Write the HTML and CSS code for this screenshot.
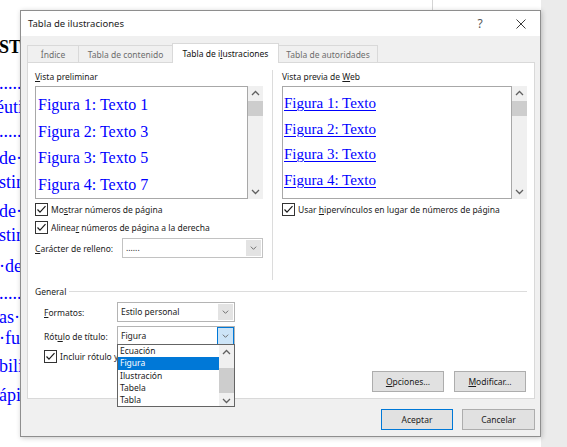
FILE: index.html
```html
<!DOCTYPE html>
<html lang="es">
<head>
<meta charset="utf-8">
<title>Tabla de ilustraciones</title>
<link rel="stylesheet" href="styles.css">
</head>
<body>
<svg class="icon-defs" aria-hidden="true">
  <symbol id="i-up" viewBox="0 0 15 15"><polyline points="4,9 7.5,5.5 11,9" fill="none" stroke="#606060" stroke-width="1.3"/></symbol>
  <symbol id="i-down" viewBox="0 0 15 15"><polyline points="4,6 7.5,9.5 11,6" fill="none" stroke="#606060" stroke-width="1.3"/></symbol>
  <symbol id="i-drop" viewBox="0 0 15 18"><polyline points="4.5,7.5 7.5,10.5 10.5,7.5" fill="none" stroke="#606060" stroke-width="1"/></symbol>
  <symbol id="i-check" viewBox="0 0 11 11"><polyline points="1.5,5.5 4,8.2 9.5,2.2" fill="none" stroke="#1a1a1a" stroke-width="1.2"/></symbol>
</svg>

<div class="desk">
  <div class="doc">
    <div class="doc-rule"></div>
    <p class="doc-p doc-head">ST</p>
    <p class="doc-p">..............<br><span class="cut">éutica</span><br>..............</p>
    <p class="doc-p">de·las<br>stintas</p>
    <p class="doc-p">de·los<br>stintos</p>
    <p class="doc-p">·de·la</p>
    <p class="doc-p">..............</p>
    <p class="doc-p doc-tight">as·he<br>·fun</p>
    <p class="doc-p">bilidad</p>
    <p class="doc-p">ápido</p>
  </div>
  <div class="doc-side"></div>
</div>

<div class="dialog">
  <div class="titlebar">
    <span class="title">Tabla de ilustraciones</span>
    <span class="help">?</span>
    <svg class="close" viewBox="0 0 10 10"><path d="M0.5 0.5 L9.5 9.5 M9.5 0.5 L0.5 9.5" stroke="#3a3a3a" stroke-width="1" fill="none"/></svg>
  </div>

  <div class="dialog-body">
    <div class="tabs">
      <div class="tab tab-index">Índice</div>
      <div class="tab tab-toc">Tabla de contenido</div>
      <div class="tab tab-figs active">Tabla de i<u>l</u>ustraciones</div>
      <div class="tab tab-auth">Tabla de autoridades</div>
    </div>

    <div class="panel">
      <div class="columns">
        <div class="col col-left">
          <div class="label"><u>V</u>ista preliminar</div>
          <div class="preview-row">
            <div class="preview preview-print">
              <div class="fig">Figura 1: Texto 1</div>
              <div class="fig">Figura 2: Texto 3</div>
              <div class="fig">Figura 3: Texto 5</div>
              <div class="fig">Figura 4: Texto 7</div>
            </div>
            <div class="vscroll">
              <svg class="arrow"><use href="#i-up"/></svg>
              <div class="thumb"></div>
              <div class="track"></div>
              <svg class="arrow"><use href="#i-down"/></svg>
            </div>
          </div>
          <div class="check first">
            <span class="box"><svg><use href="#i-check"/></svg></span>
            <span>Mo<u>s</u>trar números de página</span>
          </div>
          <div class="check">
            <span class="box"><svg><use href="#i-check"/></svg></span>
            <span>Alinea<u>r</u> números de página a la derecha</span>
          </div>
          <div class="field-row fill-row">
            <span class="field-label fill-label"><u>C</u>arácter de relleno:</span>
            <div class="select fill-select">
              <span class="select-value">......</span>
              <span class="select-btn"><svg><use href="#i-drop"/></svg></span>
            </div>
          </div>
        </div>

        <div class="col-sep"></div>

        <div class="col col-right">
          <div class="label">Vista previa de <u>W</u>eb</div>
          <div class="preview-row">
            <div class="preview preview-web">
              <div class="fig">Figura 1: Texto</div>
              <div class="fig">Figura 2: Texto</div>
              <div class="fig">Figura 3: Texto</div>
              <div class="fig">Figura 4: Texto</div>
            </div>
            <div class="vscroll">
              <svg class="arrow"><use href="#i-up"/></svg>
              <div class="thumb"></div>
              <div class="track"></div>
              <svg class="arrow"><use href="#i-down"/></svg>
            </div>
          </div>
          <div class="check first">
            <span class="box"><svg><use href="#i-check"/></svg></span>
            <span>Usar <u>h</u>ipervínculos en lugar de números de página</span>
          </div>
        </div>
      </div>

      <div class="group-head">
        <span>General</span>
        <span class="group-line"></span>
      </div>

      <div class="general">
        <div class="field-row fmt-row">
          <span class="field-label"><u>F</u>ormatos:</span>
          <div class="select gen-select">
            <span class="select-value">Estilo personal</span>
            <span class="select-btn"><svg><use href="#i-drop"/></svg></span>
          </div>
        </div>
        <div class="field-row cap-row">
          <span class="field-label">Rót<u>u</u>lo de título:</span>
          <div class="select gen-select open">
            <span class="select-value">Figura</span>
            <span class="select-btn"><svg><use href="#i-drop"/></svg></span>
            <div class="droplist">
              <ul class="options">
                <li>Ecuación</li>
                <li class="selected">Figura</li>
                <li>Ilustración</li>
                <li>Tabela</li>
                <li>Tabla</li>
              </ul>
              <div class="vscroll list-scroll">
                <svg class="arrow"><use href="#i-up"/></svg>
                <div class="track short"></div>
                <div class="thumb tall"></div>
                <svg class="arrow"><use href="#i-down"/></svg>
              </div>
            </div>
          </div>
        </div>
        <div class="check incl">
          <span class="box"><svg><use href="#i-check"/></svg></span>
          <span>Incluir rótulo y número</span>
        </div>
      </div>

      <div class="panel-buttons">
        <button class="btn"><u>O</u>pciones...</button>
        <button class="btn"><u>M</u>odificar...</button>
      </div>
    </div>

    <div class="dialog-buttons">
      <button class="btn default">Aceptar</button>
      <button class="btn cancel">Cancelar</button>
    </div>
  </div>
</div>
</body>
</html>
```

FILE: styles.css
```css
* { box-sizing: border-box; }

html, body {
  margin: 0;
  padding: 0;
}

body {
  width: 567px;
  height: 447px;
  overflow: hidden;
  position: relative;
  background: #fff;
  font-family: "Noto Sans", "Liberation Sans", sans-serif;
}

.icon-defs { position: absolute; width: 0; height: 0; }

u {
  text-decoration-thickness: 1px;
  text-underline-offset: 1px;
}

/* ---------- document behind the dialog ---------- */
.desk {
  display: flex;
  height: 447px;
}

.doc {
  width: 541px;
  background: #fff;
  font-family: "Liberation Serif", "Times New Roman", serif;
  font-size: 18px;
  color: #0000ff;
  overflow: hidden;
}

.doc-rule {
  height: 10px;
  margin-left: 432px;
  border-left: 1px solid #d4d4d4;
}

.doc-p {
  margin: 5px 0 0 -1px;
  line-height: 24px;
  white-space: nowrap;
}

.doc-p:nth-of-type(1) { margin-top: 25px; }
.doc-p:nth-of-type(2) { margin-top: 12px; }
.doc-p:nth-of-type(3) { margin-top: 3px; }
.doc-p:nth-of-type(5) { margin-top: 7px; }
.doc-p:nth-of-type(6) { margin-top: 3px; }
.doc-p:nth-of-type(7) { margin-top: 2px; }

.doc-head {
  font-weight: bold;
  color: #000;
}

.doc-tight { line-height: 21px; }

.cut { margin-left: -3px; }

.doc-side {
  flex: 1;
  background: #ebebeb;
}

/* ---------- dialog window ---------- */
.dialog {
  position: absolute;
  left: 20px;
  top: 10px;
  width: 521px;
  height: 427px;
  border: 1px solid #8e8e8e;
  background: #f0f0f0;
  box-shadow: 1px 1px 5px rgba(0, 0, 0, 0.22);
  display: flex;
  flex-direction: column;
  font-size: 8.5px;
  color: #1b1b1b;
}

.titlebar {
  flex: none;
  height: 25px;
  background: #fff;
  display: flex;
  align-items: center;
  padding-left: 7px;
}

.title {
  flex: 1;
  font-size: 9.5px;
  color: #1a1a1a;
}

.help {
  width: 10px;
  text-align: center;
  font-size: 12px;
  color: #555;
  margin-right: 31px;
}

.close {
  width: 10px;
  height: 10px;
  margin-right: 14px;
}

.dialog-body {
  flex: 1;
  display: flex;
  flex-direction: column;
  padding: 7px 5px 0 6px;
}

/* ---------- tabs ---------- */
.tabs {
  display: flex;
  align-items: flex-end;
  height: 19px;
  position: relative;
  z-index: 1;
}

.tab {
  height: 17px;
  margin-right: -1px;
  border: 1px solid #d9d9d9;
  border-bottom: none;
  background: #f0f0f0;
  color: #6d6d6d;
  display: flex;
  align-items: center;
  justify-content: center;
  white-space: nowrap;
}

.tab-index { width: 52px; }
.tab-toc { width: 95px; }
.tab-figs { width: 107px; }
.tab-auth { width: 100px; }

.tab.active {
  height: 20px;
  margin-bottom: -1px;
  background: #fff;
  color: #111;
  padding-bottom: 1px;
}

/* ---------- tab page ---------- */
.panel {
  height: 337px;
  border: 1px solid #d9d9d9;
  background: #fff;
  display: flex;
  flex-direction: column;
  padding: 0 7px 6px 7px;
}

.columns {
  display: flex;
  gap: 9px;
  height: 217px;
  flex: none;
}

.col-left { width: 228px; }
.col-right { flex: 1; }

.col-sep {
  width: 1px;
  margin-top: 7px;
  background: #dcdcdc;
}

.label {
  height: 16px;
  line-height: 16px;
  margin-top: 6px;
  white-space: nowrap;
}

.preview-row {
  display: flex;
  height: 113px;
  margin-top: 1px;
}

.preview {
  border: 1px solid #a8a8a8;
  overflow: hidden;
  font-family: "Liberation Serif", "Times New Roman", serif;
  color: #0000ff;
  white-space: nowrap;
}

.preview-print {
  width: 213px;
  font-size: 16px;
  line-height: 26.5px;
  padding: 5px 0 0 2px;
}

.preview-web {
  flex: 1;
  font-size: 15px;
  line-height: 25.5px;
  padding: 4px 0 0 1px;
}

.preview-web .fig {
  text-decoration: underline;
  text-decoration-thickness: 1px;
  text-underline-offset: 2px;
}

/* ---------- scroll bars ---------- */
.vscroll {
  width: 15px;
  flex: none;
  background: #f0f0f0;
  display: flex;
  flex-direction: column;
}

.vscroll .arrow {
  width: 15px;
  height: 15px;
  flex: none;
}

.thumb {
  height: 15px;
  flex: none;
  background: #cdcdcd;
}

.track { flex: 1; }

/* ---------- check boxes ---------- */
.check {
  display: flex;
  align-items: center;
  gap: 3px;
  height: 18px;
  white-space: nowrap;
}

.check.first { margin-top: 1px; }

.box {
  width: 13px;
  height: 13px;
  flex: none;
  border: 1px solid #333;
  background: #fff;
  display: flex;
}

.box svg {
  width: 11px;
  height: 11px;
}

/* ---------- combo boxes ---------- */
.field-row {
  display: flex;
  align-items: center;
  white-space: nowrap;
}

.field-label { width: 73px; flex: none; }
.fill-label { width: 87px; }

.fill-row { margin-top: 2px; }

.select {
  display: flex;
  height: 20px;
  border: 1px solid #c2c2c2;
  background: #fff;
  position: relative;
}

.fill-select { width: 141px; }
.gen-select { width: 118px; border-color: #b4b4b4; }

.select-value {
  flex: 1;
  padding-left: 3px;
  line-height: 18px;
}

.select-btn {
  width: 15px;
  margin: 1px;
  background: #e3e3e3;
  display: flex;
}

.select-btn svg {
  width: 15px;
  height: 16px;
}

.select.open .select-btn {
  margin: 0;
  width: 17px;
  background: #cce4f7;
  border: 1px solid #0078d7;
}

/* ---------- General group ---------- */
.group-head {
  display: flex;
  align-items: center;
  gap: 3px;
  height: 16px;
  margin-top: 3px;
  flex: none;
}

.group-line {
  flex: 1;
  height: 1px;
  background: #dcdcdc;
}

.general { padding-left: 9px; }

.fmt-row { margin-top: 3px; }
.cap-row { margin-top: 4px; position: relative; z-index: 2; }

.check.incl { margin-top: 1px; }

.droplist {
  position: absolute;
  left: -1px;
  top: 17px;
  width: 118px;
  height: 63px;
  border: 1px solid #646464;
  background: #fff;
  display: flex;
}

.options {
  list-style: none;
  margin: 0;
  padding: 0;
  flex: 1;
}

.options li {
  height: 12.25px;
  line-height: 12.25px;
  padding-left: 2px;
  color: #1a1a1a;
}

.options li.selected {
  background: #0078d7;
  color: #fff;
}

.list-scroll .track.short { flex: none; height: 8px; }
.list-scroll .thumb.tall { height: 25px; }
.list-scroll { justify-content: flex-start; }
.list-scroll .arrow:last-child { margin-top: auto; }

/* ---------- buttons ---------- */
.btn {
  font-family: inherit;
  font-size: 8.5px;
  color: #1b1b1b;
  height: 21px;
  width: 72px;
  padding: 0;
  background: #e1e1e1;
  border: 1px solid #adadad;
  border-radius: 0;
}

.panel-buttons {
  margin-top: auto;
  display: flex;
  justify-content: flex-end;
  gap: 10px;
  padding-right: 1px;
}

.dialog-buttons {
  display: flex;
  justify-content: flex-end;
  gap: 9px;
  margin-top: 10px;
}

.btn.default { border-color: #0078d7; }
.btn.cancel { width: 73px; }
```
